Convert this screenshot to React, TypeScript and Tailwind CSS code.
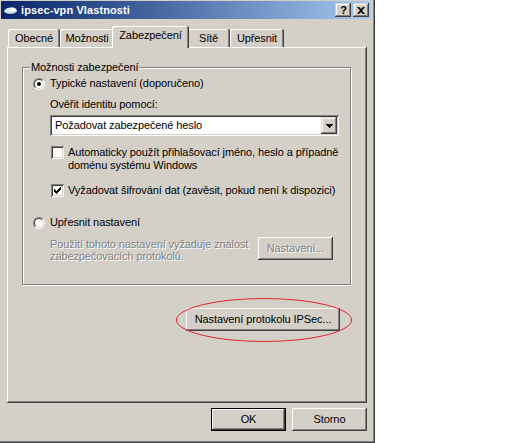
import React from "react";

const raisedBtn =
  "shadow-[inset_-1px_-1px_#404040,inset_1px_1px_#fff,inset_-2px_-2px_#808080,inset_2px_2px_#d4d0c8]";
const raisedSmall =
  "shadow-[inset_-1px_-1px_#404040,inset_1px_1px_#d4d0c8,inset_-2px_-2px_#808080,inset_2px_2px_#fff]";
const sunken =
  "shadow-[inset_1px_1px_#808080,inset_-1px_-1px_#fff,inset_2px_2px_#404040,inset_-2px_-2px_#d4d0c8]";
const tabShadow =
  "shadow-[inset_-1px_0_#404040,inset_1px_1px_#fff,inset_-2px_0_#808080]";
const disabledText = "text-[#808080] [text-shadow:1px_1px_0_#fff]";

function Radio({ checked }: { checked?: boolean }) {
  return (
    <div className="w-[12px] h-[12px] shrink-0 rounded-full border border-t-[#808080] border-l-[#808080] border-b-white border-r-white">
      <div className="w-full h-full rounded-full border border-t-[#404040] border-l-[#404040] border-b-[#d4d0c8] border-r-[#d4d0c8] bg-white flex items-center justify-center">
        {checked && <div className="w-[4px] h-[4px] rounded-full bg-black" />}
      </div>
    </div>
  );
}

function Checkbox({ checked }: { checked?: boolean }) {
  return (
    <div className={`w-[13px] h-[13px] shrink-0 bg-white relative ${sunken}`}>
      {checked && (
        <svg width="13" height="13" viewBox="0 0 13 13" className="absolute left-0 top-0">
          <rect x="3" y="5" width="1" height="3" fill="#000" />
          <rect x="4" y="6" width="1" height="3" fill="#000" />
          <rect x="5" y="7" width="1" height="3" fill="#000" />
          <rect x="6" y="6" width="1" height="3" fill="#000" />
          <rect x="7" y="5" width="1" height="3" fill="#000" />
          <rect x="8" y="4" width="1" height="3" fill="#000" />
          <rect x="9" y="3" width="1" height="3" fill="#000" />
        </svg>
      )}
    </div>
  );
}

function CloudIcon() {
  return (
    <svg width="15" height="12" viewBox="0 0 15 12" className="shrink-0">
      <ellipse cx="7.5" cy="7" rx="6.5" ry="3" fill="#b8c4d8" />
      <ellipse cx="8" cy="6" rx="5.5" ry="2.6" fill="#eef2f8" />
      <ellipse cx="5" cy="7" rx="3" ry="2" fill="#dfe6f0" />
      <ellipse cx="10" cy="5.2" rx="2.5" ry="1.6" fill="#ffffff" />
    </svg>
  );
}

function Tab({
  children,
  className,
  selected,
}: {
  children: React.ReactNode;
  className: string;
  selected?: boolean;
}) {
  return (
    <div
      className={`${className} ${tabShadow} bg-[#d4d0c8] flex items-center justify-center rounded-t-[2px] ${
        selected ? "h-[22px] -mb-[1px] -mx-[2px] relative z-10 pb-[3px]" : "h-[18px]"
      }`}
    >
      {children}
    </div>
  );
}

export default function App() {
  return (
    <div className="relative w-[512px] h-[443px] bg-white font-['Liberation_Sans',Arial,sans-serif] text-[11px] leading-[13px] tracking-[-0.1px] text-black overflow-hidden">
      <div className="w-[375px] h-[443px] bg-[#d4d0c8] pl-[1px] pt-[1px] pr-[4px] flex flex-col shadow-[inset_-1px_-1px_#404040,inset_-2px_-2px_#808080]">
        {/* Title bar */}
        <div className="h-[18px] flex items-center bg-linear-to-r from-[#0a246a] to-[#a6caf0] pl-[2px] pr-[2px]">
          <CloudIcon />
          <span className="ml-[3px] font-bold text-white tracking-[0.1px]">ipsec-vpn Vlastnosti</span>
          <div className="ml-auto flex gap-[2px]">
            <div className={`w-[16px] h-[14px] bg-[#d4d0c8] ${raisedSmall} flex items-center justify-center font-bold text-[11px] leading-[11px] pl-[1px]`}>
              ?
            </div>
            <div className={`w-[16px] h-[14px] bg-[#d4d0c8] ${raisedSmall} flex items-center justify-center`}>
              <svg width="8" height="7" viewBox="0 0 8 7">
                <path d="M0 0h2l2 2 2-2h2L5 3.5 8 7H6L4 5 2 7H0l3-3.5z" fill="#000" />
              </svg>
            </div>
          </div>
        </div>

        <div className="ml-[6px] w-[360px] mt-[7px]">
          {/* Tabs */}
          <div className="h-[21px] flex items-end pl-[1px]">
            <Tab className="w-[52px]">Obecné</Tab>
            <Tab className="w-[54px]">Možnosti</Tab>
            <Tab className="w-[77px]" selected>
              Zabezpečení
            </Tab>
            <Tab className="w-[43px]">Sítě</Tab>
            <Tab className="w-[54px]">Upřesnit</Tab>
          </div>

          {/* Panel */}
          <div className={`h-[356px] ${raisedBtn} pt-[20px] pl-[15px]`}>
            {/* Group box */}
            <div className="relative w-[329px] h-[218px] border border-[#808080] shadow-[1px_1px_0_#fff,inset_1px_1px_0_#fff]">
              <div className="absolute left-[7px] -top-[7px] px-[1px] bg-[#d4d0c8]">Možnosti zabezpečení</div>
              <div className="flex flex-col pl-[10px]">
                <div className="mt-[9px] h-[13px] flex items-center">
                  <Radio checked />
                  <span className="ml-[5px]">Typické nastavení (doporučeno)</span>
                </div>
                <div className="mt-[8px] h-[13px] pl-[17px]">Ověřit identitu pomocí:</div>
                <div className={`mt-[4px] ml-[17px] w-[289px] h-[21px] bg-white ${sunken} flex items-center pl-[5px] pr-[2px]`}>
                  <span>Požadovat zabezpečené heslo</span>
                  <div className={`ml-auto w-[16px] h-[17px] bg-[#d4d0c8] ${raisedSmall} flex items-center justify-center`}>
                    <svg width="7" height="4" viewBox="0 0 7 4">
                      <path d="M0 0h7v1H0zM1 1h5v1H1zM2 2h3v1H2zM3 3h1v1H3z" fill="#000" />
                    </svg>
                  </div>
                </div>
                <div className="mt-[10px] ml-[18px] flex items-start">
                  <Checkbox />
                  <div className="ml-[4px]">
                    <div>Automaticky použít přihlašovací jméno, heslo a případně</div>
                    <div>doménu systému Windows</div>
                  </div>
                </div>
                <div className="mt-[12px] ml-[18px] flex items-start">
                  <Checkbox checked />
                  <div className="ml-[4px]">Vyžadovat šifrování dat (zavěsit, pokud není k dispozici)</div>
                </div>
                <div className="mt-[19px] h-[13px] flex items-center">
                  <Radio />
                  <span className="ml-[5px]">Upřesnit nastavení</span>
                </div>
                <div className="mt-[8px] flex items-start">
                  <div className={`pl-[17px] w-[225px] leading-[12px] pt-[1px] ${disabledText}`}>
                    <div>Použití tohoto nastavení vyžaduje znalost</div>
                    <div>zabezpečovacích protokolů.</div>
                  </div>
                  <div className={`w-[75px] h-[23px] ${raisedBtn} flex items-center justify-center ${disabledText}`}>
                    Nastavení...
                  </div>
                </div>
              </div>
            </div>

            <div className={`mt-[23px] ml-[164px] w-[154px] h-[23px] ${raisedBtn} flex items-center justify-center`}>
              Nastavení protokolu IPSec...
            </div>
          </div>

          {/* Bottom buttons */}
          <div className="mt-[5px] flex justify-end gap-[6px]">
            <div className="w-[75px] h-[23px] border border-black">
              <div className={`w-full h-full ${raisedBtn} flex items-center justify-center`}>OK</div>
            </div>
            <div className={`w-[75px] h-[23px] ${raisedBtn} flex items-center justify-center`}>Storno</div>
          </div>
        </div>
      </div>

      {/* Red annotation ellipse */}
      <svg
        className="absolute left-[175px] top-[297px]"
        width="178"
        height="46"
        viewBox="0 0 178 46"
      >
        <ellipse cx="89" cy="23" rx="87.5" ry="21.5" fill="none" stroke="#e0282e" strokeWidth="1" />
      </svg>
    </div>
  );
}
